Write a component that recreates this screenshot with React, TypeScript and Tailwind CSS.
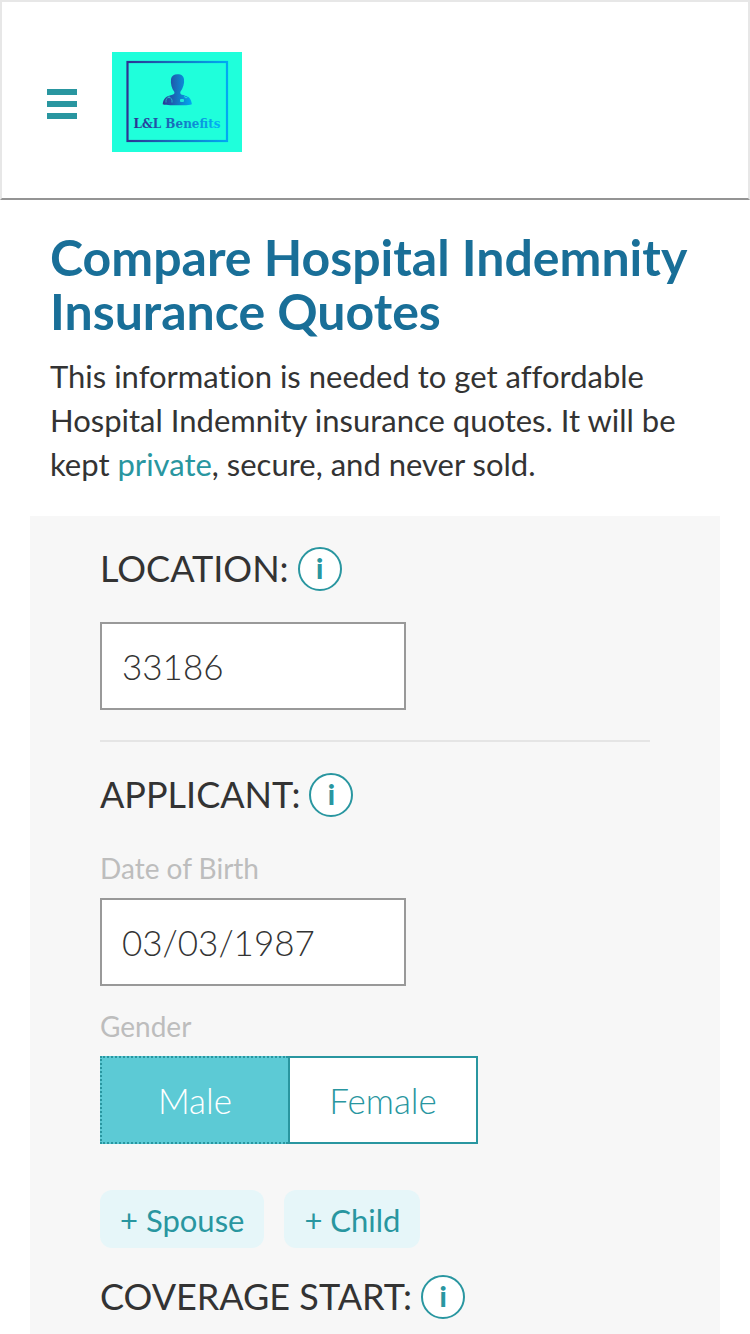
import { useState } from "react";

function Logo() {
  return (
    <svg width="130" height="100" viewBox="0 0 130 100" role="img" aria-label="L&L Benefits">
      <defs>
        <linearGradient id="frame" gradientUnits="userSpaceOnUse" x1="14" y1="0" x2="116" y2="0">
          <stop offset="0" stopColor="#2e3192" />
          <stop offset="0.5" stopColor="#1572bf" />
          <stop offset="1" stopColor="#00a9f4" />
        </linearGradient>
        <linearGradient id="person" gradientUnits="userSpaceOnUse" x1="50" y1="0" x2="80" y2="0">
          <stop offset="0" stopColor="#2e3192" />
          <stop offset="0.5" stopColor="#1671be" />
          <stop offset="1" stopColor="#00a9f4" />
        </linearGradient>
        <linearGradient id="name" gradientUnits="userSpaceOnUse" x1="22" y1="0" x2="108" y2="0">
          <stop offset="0" stopColor="#2e3192" />
          <stop offset="0.5" stopColor="#1671be" />
          <stop offset="1" stopColor="#00b4f8" />
        </linearGradient>
      </defs>
      <rect width="130" height="100" fill="#1fffdb" />
      <rect x="15.5" y="10" width="99.5" height="79" fill="none" stroke="url(#frame)" strokeWidth="2.2" />
      <path
        fill="url(#person)"
        d="M65.500 22.300c-3.500.1-6.100 1.600-6.500 4.600-.6 5 .7 9.300 3.400 13.100.3 2.200-.8 2.400-2.800 3-5 1.200-8.400 3.200-8.900 9.300 1.800.7 5 .9 7.500.9h13.800c3 0 6-.2 7.900-1-.7-6-3.500-8-8.500-9.200-2.200-.5-3.400-.8-3.100-3 2.800-3.800 4.300-8.500 3.700-13.100-.7-3.600-3.700-4.800-6.500-4.600z"
      />
      <path
        d="M57 43.500v2.500m-3 4.500c-.4-3.500 1-5 3-5s3.400 1.500 3 5"
        fill="none"
        stroke="#1fffdb"
        strokeWidth="0.7"
        opacity="0.75"
      />
      <rect x="68" y="47" width="4" height="3" rx="1" fill="#1fffdb" opacity="0.8" />
      <circle cx="74" cy="44.500" r="1.300" fill="none" stroke="#1fffdb" strokeWidth="0.7" />
      <text
        x="65"
        y="76"
        textAnchor="middle"
        fontSize="12"
        fontWeight="700"
        fontFamily="'DejaVu Serif', 'Liberation Serif', serif"
        fill="url(#name)"
      >
        L&amp;L Benefits
      </text>
    </svg>
  );
}

function InfoButton({ label }: { label: string }) {
  return (
    <button
      type="button"
      aria-label={label}
      className="flex h-11 w-11 shrink-0 items-center justify-center rounded-full border-2 border-[#2996a0] bg-white pb-0.5 text-[28px] leading-none font-black text-[#2996a0]"
    >
      i
    </button>
  );
}

function SectionTitle({ title, info }: { title: string; info: string }) {
  return (
    <div className="flex items-center gap-[9px]">
      <h2 className="pb-0.5 text-4xl leading-[42px]">{title}</h2>
      <InfoButton label={info} />
    </div>
  );
}

const fieldClass =
  "block h-22 w-[306px] max-w-full border-2 border-[#999999] bg-white px-5 text-[35px] font-light text-[#333333]";
const chipClass = "h-[58px] rounded-xl bg-[#e6f6f9] px-5 pt-0.5 text-[31px] leading-none text-[#2996a0]";

export default function App() {
  const [zip, setZip] = useState("33186");
  const [dob, setDob] = useState("03/03/1987");
  const [gender, setGender] = useState("male");

  return (
    <div className="flex min-h-screen flex-col bg-white font-['Lato',sans-serif] text-[#333333]">
      <header className="flex items-center gap-[35px] border-2 border-[#e7e7e7] border-b-[#949494] px-[45px] pt-[50px] pb-[46px]">
        <button type="button" aria-label="Menu" className="flex flex-col gap-1.5 pt-1">
          <span className="h-1.5 w-[30px] bg-[#2996a0]" />
          <span className="h-1.5 w-[30px] bg-[#2996a0]" />
          <span className="h-1.5 w-[30px] bg-[#2996a0]" />
        </button>
        <a href="#">
          <Logo />
        </a>
      </header>

      <main className="flex flex-1 flex-col px-[30px]">
        <div className="px-5 pt-[30px] pb-[30px]">
          <h1 className="text-[50px] leading-[54px] font-bold text-[#196f98]">
            Compare Hospital Indemnity Insurance Quotes
          </h1>
          <p className="mt-4 text-[31px] leading-11 [font-variant-ligatures:none]">
            This information is needed to get affordable Hospital Indemnity insurance quotes. It will be kept{" "}
            <a href="#" className="text-[#2996a0]">
              private
            </a>
            , secure, and never sold.
          </p>
        </div>

        <form className="flex-1 bg-[#f7f7f7] px-[70px] pt-[31px]">
          <section className="border-b-2 border-[#e5e5e5] pb-[30px]">
            <SectionTitle title="LOCATION:" info="About location" />
            <input
              aria-label="Location"
              className={fieldClass + " mt-[31px]"}
              value={zip}
              onChange={(e) => setZip(e.target.value)}
            />
          </section>

          <section className="pt-[31px]">
            <SectionTitle title="APPLICANT:" info="About the applicant" />
            <label htmlFor="dob" className="mt-[31px] mb-2.5 block text-[28px] leading-10 text-[#bdbdbd]">
              Date of Birth
            </label>
            <input id="dob" className={fieldClass} value={dob} onChange={(e) => setDob(e.target.value)} />

            <fieldset>
              <legend className="pt-5 pb-2.5 text-[28px] leading-10 text-[#bdbdbd]">Gender</legend>
              <div className="flex h-22 w-[378px] max-w-full text-[35px] font-light">
                <label className="flex flex-1 items-center justify-center border-2 border-r-0 border-[#2996a0] bg-white text-[#2996a0] has-checked:border-dotted has-checked:bg-[#5ccad5] has-checked:text-white">
                  <input
                    type="radio"
                    name="gender"
                    className="sr-only"
                    checked={gender === "male"}
                    onChange={() => setGender("male")}
                  />
                  Male
                </label>
                <label className="flex flex-1 items-center justify-center border-2 border-[#2996a0] bg-white text-[#2996a0] has-checked:border-dotted has-checked:bg-[#5ccad5] has-checked:text-white">
                  <input
                    type="radio"
                    name="gender"
                    className="sr-only"
                    checked={gender === "female"}
                    onChange={() => setGender("female")}
                  />
                  Female
                </label>
              </div>
            </fieldset>

            <div className="mt-[46px] flex gap-5">
              <button type="button" className={chipClass}>
                + Spouse
              </button>
              <button type="button" className={chipClass}>
                + Child
              </button>
            </div>
          </section>

          <section className="pt-[27px]">
            <SectionTitle title="COVERAGE START:" info="About coverage start" />
          </section>
        </form>
      </main>
    </div>
  );
}
